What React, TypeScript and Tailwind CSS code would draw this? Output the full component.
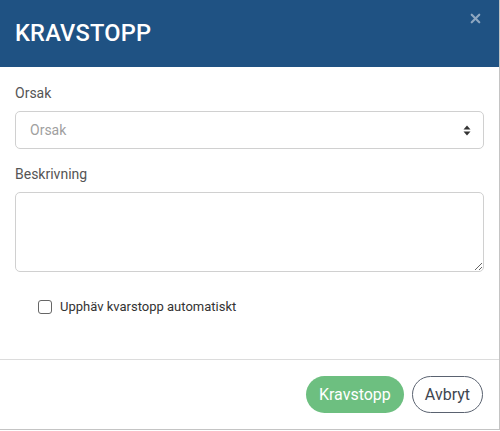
import { X } from 'lucide-react';

export default function App() {
  return (
    <div className="w-[500px] h-[430px] bg-white border-r border-b border-[#c4c4c4] flex flex-col font-['Roboto',sans-serif]">
      {/* Header */}
      <div className="h-[67px] bg-[#1f5283] pl-[15px] pr-[16px] flex items-center justify-between">
        <h1 className="text-white text-[23.6px] font-medium tracking-[0.2px]">KRAVSTOPP</h1>
        <button className="self-start mt-[11px] text-[#8fa7c0]">
          <X className="w-[15px] h-[15px] stroke-[3.5]" />
        </button>
      </div>

      {/* Body */}
      <div className="flex-1 px-[15px] pt-[16px]">
        <label className="block text-[14px] leading-[20px] text-[#555] mb-[8px]">Orsak</label>
        <div className="h-[38px] border border-[#d0d0d0] rounded-[5px] flex items-center justify-between pl-[14px] pr-[12px]">
          <span className="text-[14px] text-[#a0a0a0]">Orsak</span>
          <svg width="8" height="11" viewBox="0 0 8 11" className="text-[#333]">
            <path d="M4 0.5 L7.5 4.5 H0.5 Z" fill="currentColor" />
            <path d="M4 10.5 L7.5 6.5 H0.5 Z" fill="currentColor" />
          </svg>
        </div>

        <label className="block text-[14px] leading-[20px] text-[#555] mt-[15px] mb-[8px]">Beskrivning</label>
        <textarea className="block w-full h-[80px] border border-[#d0d0d0] rounded-[5px] outline-none" />

        <div className="flex items-center gap-[8px] mt-[25px] pl-[23px] h-[20px]">
          <div className="w-[14px] h-[14px] border border-[#666] rounded-[3px] bg-white" />
          <span className="text-[13px] text-[#333]">Upphäv kvarstopp automatiskt</span>
        </div>
      </div>

      {/* Footer */}
      <div className="h-[70px] border-t border-[#dcdcdc] flex items-center justify-end gap-[8px] pr-[16px]">
        <button className="h-[37px] px-[13px] rounded-full bg-[#6dbf80] text-white text-[16px]">Kravstopp</button>
        <button className="h-[37px] px-[12px] rounded-full border border-[#5a6270] bg-white text-[#3e4650] text-[16px]">Avbryt</button>
      </div>
    </div>
  );
}
